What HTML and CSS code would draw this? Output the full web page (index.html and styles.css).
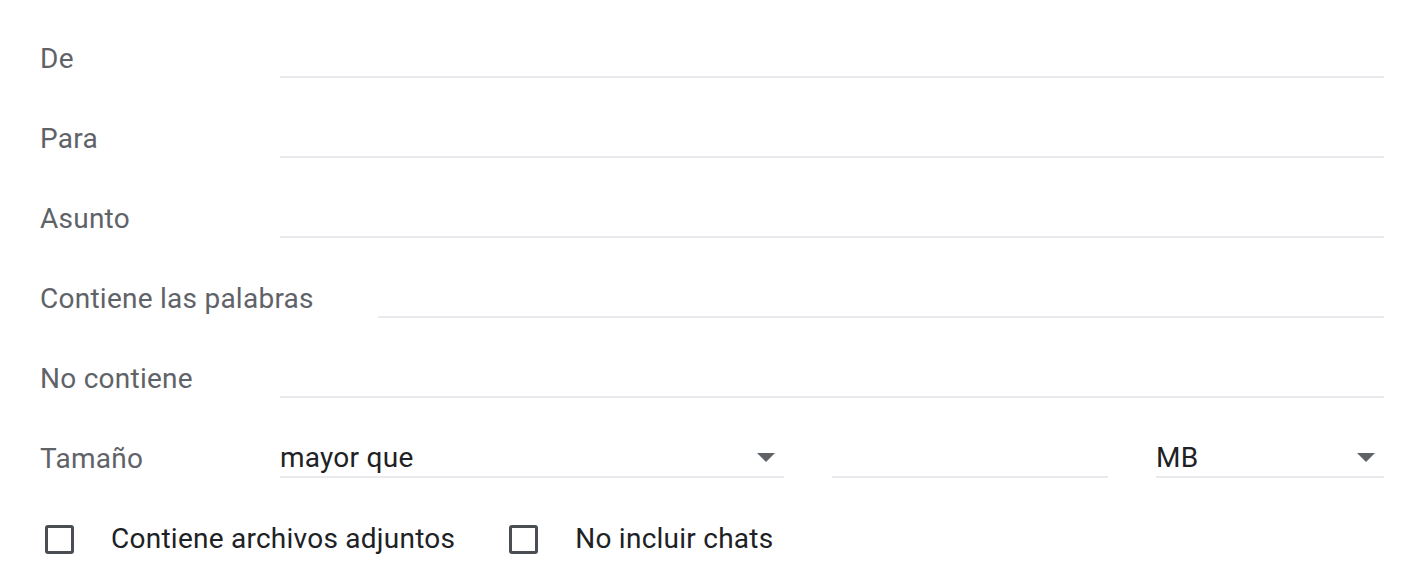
FILE: index.html
```html
<!DOCTYPE html>
<html lang="es">
<head>
<meta charset="utf-8">
<title>Búsqueda avanzada</title>
<link rel="stylesheet" href="styles.css">
</head>
<body>
<form class="search-form">
  <div class="row">
    <label class="label" for="f-from">De</label>
    <input class="field" id="f-from" type="text">
  </div>
  <div class="row">
    <label class="label" for="f-to">Para</label>
    <input class="field" id="f-to" type="text">
  </div>
  <div class="row">
    <label class="label" for="f-subject">Asunto</label>
    <input class="field" id="f-subject" type="text">
  </div>
  <div class="row">
    <label class="label" for="f-has">Contiene las palabras</label>
    <input class="field" id="f-has" type="text">
  </div>
  <div class="row">
    <label class="label" for="f-not">No contiene</label>
    <input class="field" id="f-not" type="text">
  </div>
  <div class="row">
    <span class="label">Tamaño</span>
    <div class="size-group">
      <div class="select">
        <span class="select-value">mayor que</span>
        <svg class="caret" width="18" height="9" viewBox="0 0 18 9"><polygon points="0,0 18,0 9,9"/></svg>
      </div>
      <input class="field" type="text">
      <div class="select">
        <span class="select-value">MB</span>
        <svg class="caret" width="18" height="9" viewBox="0 0 18 9"><polygon points="0,0 18,0 9,9"/></svg>
      </div>
    </div>
  </div>
  <div class="checks">
    <label class="check"><input type="checkbox" class="box"><span>Contiene archivos adjuntos</span></label>
    <label class="check"><input type="checkbox" class="box"><span>No incluir chats</span></label>
  </div>
</form>
</body>
</html>
```

FILE: styles.css
```css
html, body {
  margin: 0;
  padding: 0;
  background: #ffffff;
}

body {
  font-family: Roboto, "Liberation Sans", Arial, sans-serif;
  font-size: 28px;
  letter-spacing: 0.25px;
  color: #202124;
}

.search-form {
  padding: 1px 28px 0 40px;
}

.row {
  display: flex;
  align-items: flex-end;
  height: 77px;
  margin-bottom: 3px;
}

.label {
  flex: 0 0 auto;
  min-width: 240px;
  box-sizing: border-box;
  padding-right: 64px;
  padding-bottom: 3px;
  font-size: 28px;
  line-height: 32px;
  color: #5f6368;
  white-space: nowrap;
}

.field {
  flex: 1 1 auto;
  min-width: 0;
  height: 40px;
  box-sizing: border-box;
  margin: 0;
  padding: 0 0 2px 0;
  border: none;
  border-bottom: 2px solid #e8eaed;
  background: transparent;
  font-family: inherit;
  font-size: 28px;
  color: #202124;
  outline: none;
}

.size-group {
  flex: 1 1 auto;
  display: grid;
  grid-template-columns: 504px 276px 228px;
  column-gap: 48px;
  align-items: end;
}

.select {
  display: flex;
  align-items: flex-end;
  justify-content: space-between;
  height: 40px;
  box-sizing: border-box;
  padding: 0 9px 2px 0;
  border-bottom: 2px solid #e8eaed;
}

.select-value {
  font-size: 28px;
  line-height: 32px;
  color: #202124;
}

.caret {
  fill: #5f6368;
  margin-bottom: 12px;
}

.checks {
  display: flex;
  align-items: center;
  height: 56px;
  margin-top: 33px;
  padding-left: 5px;
  gap: 54px;
}

.check {
  display: flex;
  align-items: center;
  gap: 37px;
  font-size: 28px;
  line-height: 32px;
  color: #202124;
  cursor: pointer;
}

.box {
  appearance: none;
  -webkit-appearance: none;
  width: 29px;
  height: 29px;
  margin: 0;
  box-sizing: border-box;
  border: 3px solid #4a4d51;
  border-radius: 3px;
  background: #ffffff;
}
```
